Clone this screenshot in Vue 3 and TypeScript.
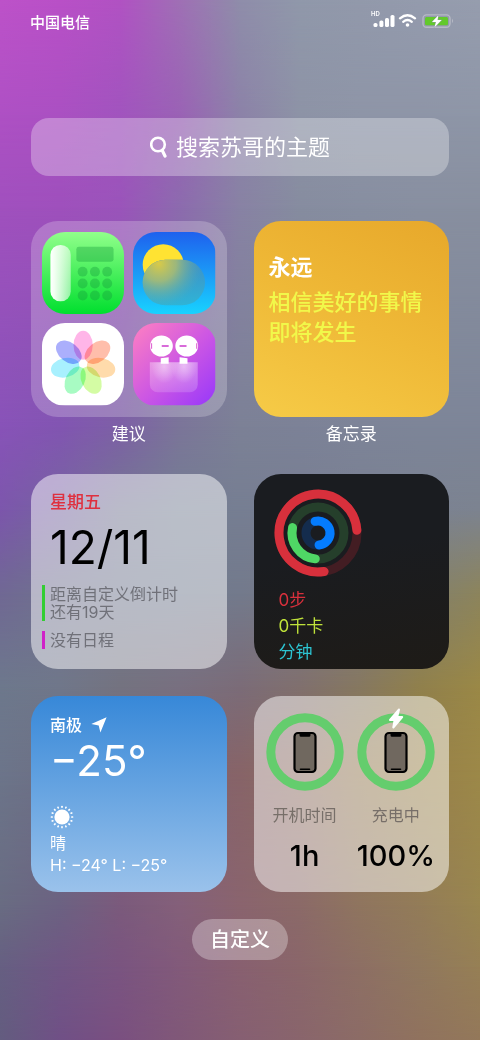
<script setup lang="ts">
import { ref } from 'vue'

interface Row { at: number; colors: string[] }

// Wallpaper: colour rows at a given height (percent), faded one into the next.
const rows: Row[] = [
  { at: 0, colors: ['#bd52c9', '#b950c7', '#b152c3', '#9f70b5', '#8f8daa', '#9098aa', '#9299ab', '#949bad', '#969dae'] },
  { at: 11, colors: ['#ae50c4', '#aa50c2', '#a154be', '#9a62b5', '#8c82a8', '#8d93a6', '#8e95a7', '#8e95a7', '#8e96a7'] },
  { at: 20, colors: ['#a050be', '#9e50bc', '#9a54ba', '#8c6bae', '#8882a4', '#868c9f', '#878ea0', '#888fa0', '#888f9f'] },
  { at: 41, colors: ['#8853b8', '#8255b2', '#7d60a6', '#7b7599', '#7c8196', '#7c8297', '#7d8498', '#7d8598', '#7d8598'] },
  { at: 49, colors: ['#7c56ac', '#7664a0', '#747692', '#747e92', '#767e92', '#787e92', '#7a8092', '#7b8292', '#7c8390'] },
  { at: 57, colors: ['#706894', '#70728e', '#70778e', '#707a8e', '#737a8c', '#787a88', '#7c7a80', '#82806e', '#8c845c'] },
  { at: 66, colors: ['#6d788c', '#70778a', '#747380', '#787080', '#7b6c78', '#80706e', '#867860', '#90804c', '#9a8846'] },
  { at: 74, colors: ['#6c758a', '#6d6f84', '#7c6676', '#82626e', '#876468', '#8c6c60', '#927850', '#988048', '#9c8848'] },
  { at: 87, colors: ['#696c82', '#6c6282', '#7b5a7c', '#84607a', '#8a646e', '#8b6a68', '#8f755f', '#937c58', '#99864f'] },
  { at: 93, colors: ['#665f82', '#705684', '#7a5480', '#825a7a', '#886070', '#8a666a', '#8d6f64', '#90785e', '#967f55'] },
  { at: 100, colors: ['#635c7f', '#705086', '#7a5080', '#805878', '#865f72', '#89656c', '#8c6c66', '#90725e', '#93785a'] },
]
const rowStyle = (row: Row, i: number) => {
  const image = `linear-gradient(to right, ${row.colors.join(', ')})`
  if (i === 0) return { backgroundImage: image }
  const mask = `linear-gradient(to bottom, transparent ${rows[i - 1].at}%, #000 ${row.at}%)`
  return { backgroundImage: image, maskImage: mask }
}

const petals = ['#ff8fdc', '#ff9c80', '#ffc880', '#bdfb74', '#7af9a4', '#7be9fd', '#7f86fb']

const arc = (r: number, from: number, to: number): string => {
  const point = (deg: number) => {
    const a = (deg * Math.PI) / 180
    return `${(44 + r * Math.cos(a)).toFixed(2)} ${(44 + r * Math.sin(a)).toFixed(2)}`
  }
  return `M${point(from)} A${r} ${r} 0 ${to - from > 180 ? 1 : 0} 1 ${point(to)}`
}
const rings = [
  { r: 39, color: '#d8303c', track: '#431d23', d: arc(39, 81, 356) },
  { r: 26, color: '#4fd765', track: '#253f2b', d: arc(26, 96, 192) },
  { r: 12, color: '#047cff', track: '#142c4d', d: arc(12, 256, 445) },
]
const stats = [
  { text: '0步', tone: 'red' },
  { text: '0千卡', tone: 'lime' },
  { text: '分钟', tone: 'cyan' },
]
const batteries = [
  { label: '开机时间', value: '1h', charging: false },
  { label: '充电中', value: '100%', charging: true },
]
const rays = Array.from({ length: 16 }, (_, i) => i * 22.5)
const query = ref('')
</script>

<template>
  <div class="screen">
    <div class="wallpaper" aria-hidden="true">
      <div v-for="(row, i) in rows" :key="row.at" class="wash" :style="rowStyle(row, i)"></div>
    </div>

    <header class="status">
      <span class="carrier">中国电信</span>
      <svg class="signals" width="84" height="20" viewBox="0 0 84 20" aria-label="信号与电量">
        <text x="1" y="5" class="hd">HD</text>
        <g fill="#fff">
          <rect x="3.5" y="12" width="4" height="4" rx="1.6" />
          <rect x="9.4" y="9.5" width="4" height="6.5" rx="1.6" />
          <rect x="15" y="7" width="4" height="9" rx="1.6" />
          <rect x="20.5" y="4" width="4" height="12" rx="1.6" />
          <circle cx="37.5" cy="14" r="1.8" />
        </g>
        <g fill="none" stroke="#fff" stroke-width="2.3" stroke-linecap="round">
          <path d="M30 7.3Q37.5 1.1 45 7.3" />
          <path d="M33.2 10.8Q37.5 7.3 41.8 10.8" />
        </g>
        <rect x="53" y="3.9" width="27" height="12.4" rx="3.5" fill="none" stroke="#b7bac5" stroke-width="1.4" />
        <rect x="55" y="6" width="23" height="8.2" rx="1.5" fill="#62c92b" />
        <path d="M82 7.8q2 2.2 0 4.4z" fill="#b7bac5" />
        <path d="M68.4 4.2 62 11h4l-1.6 5.4 7.2-7.4h-4z" fill="#fff" stroke="#8d94a4" stroke-width=".8" paint-order="stroke" />
      </svg>
    </header>

    <main>
      <label class="search">
        <svg width="18" height="22" viewBox="0 0 18 22" fill="none" stroke="#fff" aria-hidden="true">
          <circle cx="8" cy="8.5" r="6.8" stroke-width="2.6" />
          <path d="M12.3 14.5 15 20" stroke-width="3.2" stroke-linecap="round" />
        </svg>
        <input v-model="query" type="text" placeholder="搜索苏哥的主题" aria-label="搜索苏哥的主题" />
      </label>

      <div class="widgets">
        <figure>
          <div class="card folder">
            <button type="button" class="app" aria-label="电话">
              <svg viewBox="0 0 83 83">
                <defs>
                  <linearGradient id="call-bg" x2="0" y2="1"><stop stop-color="#91ff8b" /><stop offset="1" stop-color="#00df2e" /></linearGradient>
                  <linearGradient id="handset"><stop stop-color="#fff" /><stop offset=".2" stop-color="#f2fff2" /><stop offset="1" stop-color="#fff" stop-opacity=".5" /></linearGradient>
                </defs>
                <rect width="83" height="83" fill="url(#call-bg)" />
                <rect x="8.5" y="13" width="20.5" height="57" rx="10" fill="url(#handset)" />
                <g fill="#14983a" fill-opacity=".36">
                  <rect x="34.7" y="15" width="37.5" height="15" rx="2.5" />
                  <template v-for="y in [40, 52, 64]" :key="y">
                    <circle v-for="x in [41, 53.4, 65.8]" :key="x" :cx="x" :cy="y" r="5" />
                  </template>
                </g>
              </svg>
            </button>
            <button type="button" class="app" aria-label="天气">
              <svg viewBox="0 0 83 83">
                <defs>
                  <linearGradient id="sky-bg" x2="0" y2="1"><stop stop-color="#1e61ee" /><stop offset="1" stop-color="#18d3ff" /></linearGradient>
                  <linearGradient id="cloud" x2="0" y2="1"><stop stop-color="#3f8fc6" /><stop offset="1" stop-color="#2fb4d6" /></linearGradient>
                  <radialGradient id="glow" gradientUnits="userSpaceOnUse" cx="26" cy="32" r="44"><stop stop-color="#d8ca48" /><stop offset=".4" stop-color="#a9bc72" stop-opacity=".88" /><stop offset="1" stop-color="#5aaaac" stop-opacity="0" /></radialGradient>
                </defs>
                <rect width="83" height="83" fill="url(#sky-bg)" />
                <circle cx="30.5" cy="33" r="20.7" fill="#ffe332" />
                <rect x="9.7" y="28" width="63" height="46" rx="23" fill="url(#cloud)" />
                <rect x="9.7" y="28" width="63" height="46" rx="23" fill="url(#glow)" />
              </svg>
            </button>
            <button type="button" class="app" aria-label="照片">
              <svg viewBox="0 0 83 83">
                <rect width="83" height="83" fill="#fff" />
                <ellipse
                  v-for="(color, i) in petals" :key="color" class="petal"
                  cx="41.5" cy="22.5" rx="9.7" ry="14.6" :fill="color"
                  :transform="`rotate(${(i * 360) / 7} 41.5 41)`"
                />
                <circle cx="41.5" cy="41" r="4" fill="#fff" />
              </svg>
            </button>
            <button type="button" class="app" aria-label="耳机">
              <svg viewBox="0 0 83 83">
                <defs>
                  <linearGradient id="buds-bg" x2="1" y2="1"><stop stop-color="#ff80c1" /><stop offset=".55" stop-color="#ca55e5" /><stop offset="1" stop-color="#9738fa" /></linearGradient>
                  <linearGradient id="case" x2="0" y2="1"><stop stop-color="#fff" stop-opacity=".34" /><stop offset="1" stop-color="#fff" stop-opacity=".16" /></linearGradient>
                  <radialGradient id="shine"><stop stop-color="#fff" stop-opacity=".42" /><stop offset="1" stop-color="#fff" stop-opacity="0" /></radialGradient>
                  <clipPath id="case-clip"><rect x="17" y="39.7" width="48.3" height="30.3" /></clipPath>
                </defs>
                <rect width="83" height="83" fill="url(#buds-bg)" />
                <g fill="#fff">
                  <ellipse cx="28.7" cy="23.2" rx="11.5" ry="10.7" />
                  <ellipse cx="54.2" cy="23.2" rx="11.5" ry="10.7" />
                  <path d="M28 35.5l8-1V41h-8zM55 35.5l-8-1V41h8z" />
                </g>
                <path d="M29 23.3h7M47 23.3h7" stroke="#d86bd9" stroke-width="2" />
                <path d="M18.7 20.5v5.5M64.3 20.5v5.5" stroke="#e06ad4" stroke-width="1.2" />
                <path d="M17 39.7h48.3V62a8 8 0 0 1-8 8H25a8 8 0 0 1-8-8z" fill="url(#case)" />
                <g fill="url(#shine)" clip-path="url(#case-clip)">
                  <ellipse cx="31.5" cy="44" rx="13" ry="17" />
                  <ellipse cx="51.5" cy="44" rx="13" ry="17" />
                </g>
              </svg>
            </button>
          </div>
          <figcaption>建议</figcaption>
        </figure>

        <figure>
          <article class="card memo">
            <h2>永远</h2>
            <p>相信美好的事情<br />即将发生</p>
          </article>
          <figcaption>备忘录</figcaption>
        </figure>

        <article class="card calendar">
          <h2>星期五</h2>
          <time>12/11</time>
          <p class="event green">距离自定义倒计时<br />还有19天</p>
          <p class="event magenta">没有日程</p>
        </article>

        <article class="card activity">
          <svg width="88" height="88" viewBox="0 0 88 88" fill="none" stroke-width="9" aria-hidden="true">
            <template v-for="ring in rings" :key="ring.r">
              <circle cx="44" cy="44" :r="ring.r" :stroke="ring.track" />
              <path :d="ring.d" :stroke="ring.color" stroke-linecap="round" />
            </template>
          </svg>
          <p v-for="s in stats" :key="s.text" :class="s.tone">{{ s.text }}</p>
        </article>

        <article class="card weather">
          <h2>
            南极
            <svg width="16" height="16" viewBox="0 0 16 16" fill="#fff" aria-hidden="true"><path d="M15.6.3 9.4 15.4 7.7 8.5.3 7z" /></svg>
          </h2>
          <p class="temp">−25°</p>
          <svg class="sun" width="24" height="24" viewBox="0 0 24 24" fill="#fff" aria-hidden="true">
            <circle cx="12" cy="12" r="7.6" />
            <rect v-for="a in rays" :key="a" x="11.2" y=".7" width="1.6" height="2.2" rx=".6" :transform="`rotate(${a} 12 12)`" />
          </svg>
          <p>晴</p>
          <p>H: −24° L: −25°</p>
        </article>

        <article class="card battery">
          <section v-for="b in batteries" :key="b.label">
            <svg width="78" height="86" viewBox="0 0 78 86" aria-hidden="true">
              <circle cx="39" cy="47" r="34.2" fill="none" stroke="#64cd6d" stroke-width="9" />
              <rect x="28.5" y="28" width="21" height="39" rx="3.5" fill="#70685f" stroke="#000" stroke-width="2.2" />
              <path d="M33.5 28h11v2.2a1.5 1.5 0 0 1-1.5 1.5h-8a1.5 1.5 0 0 1-1.5-1.5z" />
              <path d="M34.5 64.2h9" stroke="#000" stroke-width="1.6" stroke-linecap="round" />
              <path v-if="b.charging" d="M42 4.5 33 15h4.6L36.3 22.5 45.2 12h-5z" fill="#fff" stroke="#fff" stroke-width="2" stroke-linejoin="round" />
            </svg>
            <h3>{{ b.label }}</h3>
            <strong>{{ b.value }}</strong>
          </section>
        </article>
      </div>

      <button type="button" class="customize">自定义</button>
    </main>
  </div>
</template>

<style>
body { margin: 0; background: #79708a; }
</style>

<style scoped>
.screen {
  position: relative;
  isolation: isolate;
  box-sizing: border-box;
  min-height: 100vh;
  padding-bottom: 40px;
  color: #fff;
  font-family: Inter, "Noto Sans CJK SC", sans-serif;
}
.wallpaper, .wash { position: absolute; inset: 0; z-index: -1; }
.wash { z-index: auto; }
h2, h3, p, figure { margin: 0; font-weight: 400; }
svg { display: block; flex: none; }
button { border: 0; padding: 0; font: inherit; color: inherit; cursor: pointer; }

.status {
  display: flex;
  align-items: center;
  justify-content: space-between;
  height: 42px;
  padding: 0 26px 0 30px;
}
.carrier { font-size: 15px; font-weight: 500; }
.hd { fill: #fff; font-size: 6px; font-weight: 600; }

main { display: flex; flex-direction: column; padding: 76px 31px 0; }
.search {
  display: flex;
  align-items: center;
  justify-content: center;
  gap: 8px;
  height: 58px;
  border-radius: 18px;
  background: rgba(255, 255, 255, .3);
}
.search input {
  width: 7em;
  padding: 0;
  border: 0;
  outline: 0;
  background: none;
  color: #fff;
  font: inherit;
  font-size: 22px;
  line-height: 32px;
}
.search input::placeholder { color: #fff; opacity: 1; }

.widgets {
  display: grid;
  grid-template-columns: 1fr 1fr;
  gap: 27px;
  margin-top: 45px;
}
.card {
  box-sizing: border-box;
  aspect-ratio: 1;
  border-radius: 27px;
  overflow: hidden;
}
figcaption {
  padding-top: 4px;
  font-size: 17px;
  line-height: 26px;
  text-align: center;
}

.folder {
  display: grid;
  grid-template-columns: 1fr 1fr;
  gap: 9px;
  padding: 11px;
  background: rgba(255, 255, 255, .22);
}
.app { border-radius: 23px; overflow: hidden; background: none; }
.app svg { width: 100%; }
.petal { opacity: .66; mix-blend-mode: multiply; }

.memo {
  padding: 30px 15px;
  background: linear-gradient(25deg, #f6cb47, #efb937 50%, #e7a82b);
  font-size: 22px;
}
.memo h2 { font-size: 22px; font-weight: 700; line-height: 32px; }
.memo p { margin-top: 4px; color: #f1f84a; font-weight: 500; line-height: 30px; }

.calendar { padding: 16px 19px; background: rgba(255, 255, 255, .5); }
.calendar h2 { color: #df303f; font-size: 17px; font-weight: 500; line-height: 24px; }
.calendar time {
  display: block;
  margin: 8px 0 13px;
  color: #000;
  font-size: 46px;
  line-height: 50px;
}
.event {
  margin-left: -8px;
  padding-left: 5px;
  border-left: 3px solid;
  color: #707179;
  font-size: 16px;
  line-height: 18px;
}
.event + .event { margin-top: 10px; }
.green { border-color: #32ce32; }
.magenta { border-color: #d022c8; }

.activity { padding: 15px 20px; background: linear-gradient(170deg, #1a1c20 40%, #1e1b17); }
.activity p { padding-left: 5px; font-size: 17px; line-height: 26px; }
.activity svg { margin-bottom: 10px; }
.activity .red { color: #d8303c; }
.activity .lime { color: #bfe23a; }
.activity .cyan { color: #2cc4d2; }

.weather {
  padding: 17px 19px;
  background: linear-gradient(#3788d8, #9ac2eb);
  font-size: 16px;
  line-height: 22px;
}
.weather h2 { display: flex; align-items: center; gap: 9px; font-size: 16px; font-weight: 500; line-height: 24px; }
.temp { font-size: 42px; line-height: 48px; }
.sun { margin: 20px 0 3px; }

.battery {
  display: grid;
  grid-template-columns: 1fr 1fr;
  gap: 13px;
  padding: 9px 14px 9px 12px;
  background: rgba(255, 255, 255, .5);
}
.battery section { display: flex; flex-direction: column; align-items: center; }
.battery h3 { margin-top: 12px; color: #776f69; font-size: 16px; line-height: 24px; }
.battery strong { margin-top: 9px; color: #000; font-size: 29px; font-weight: 500; line-height: 40px; }

.customize {
  align-self: center;
  margin-top: 27px;
  padding: 2px 18px 0;
  border-radius: 21px;
  background: rgba(255, 255, 255, .3);
  font-size: 20px;
  font-weight: 500;
  line-height: 39px;
}
</style>
